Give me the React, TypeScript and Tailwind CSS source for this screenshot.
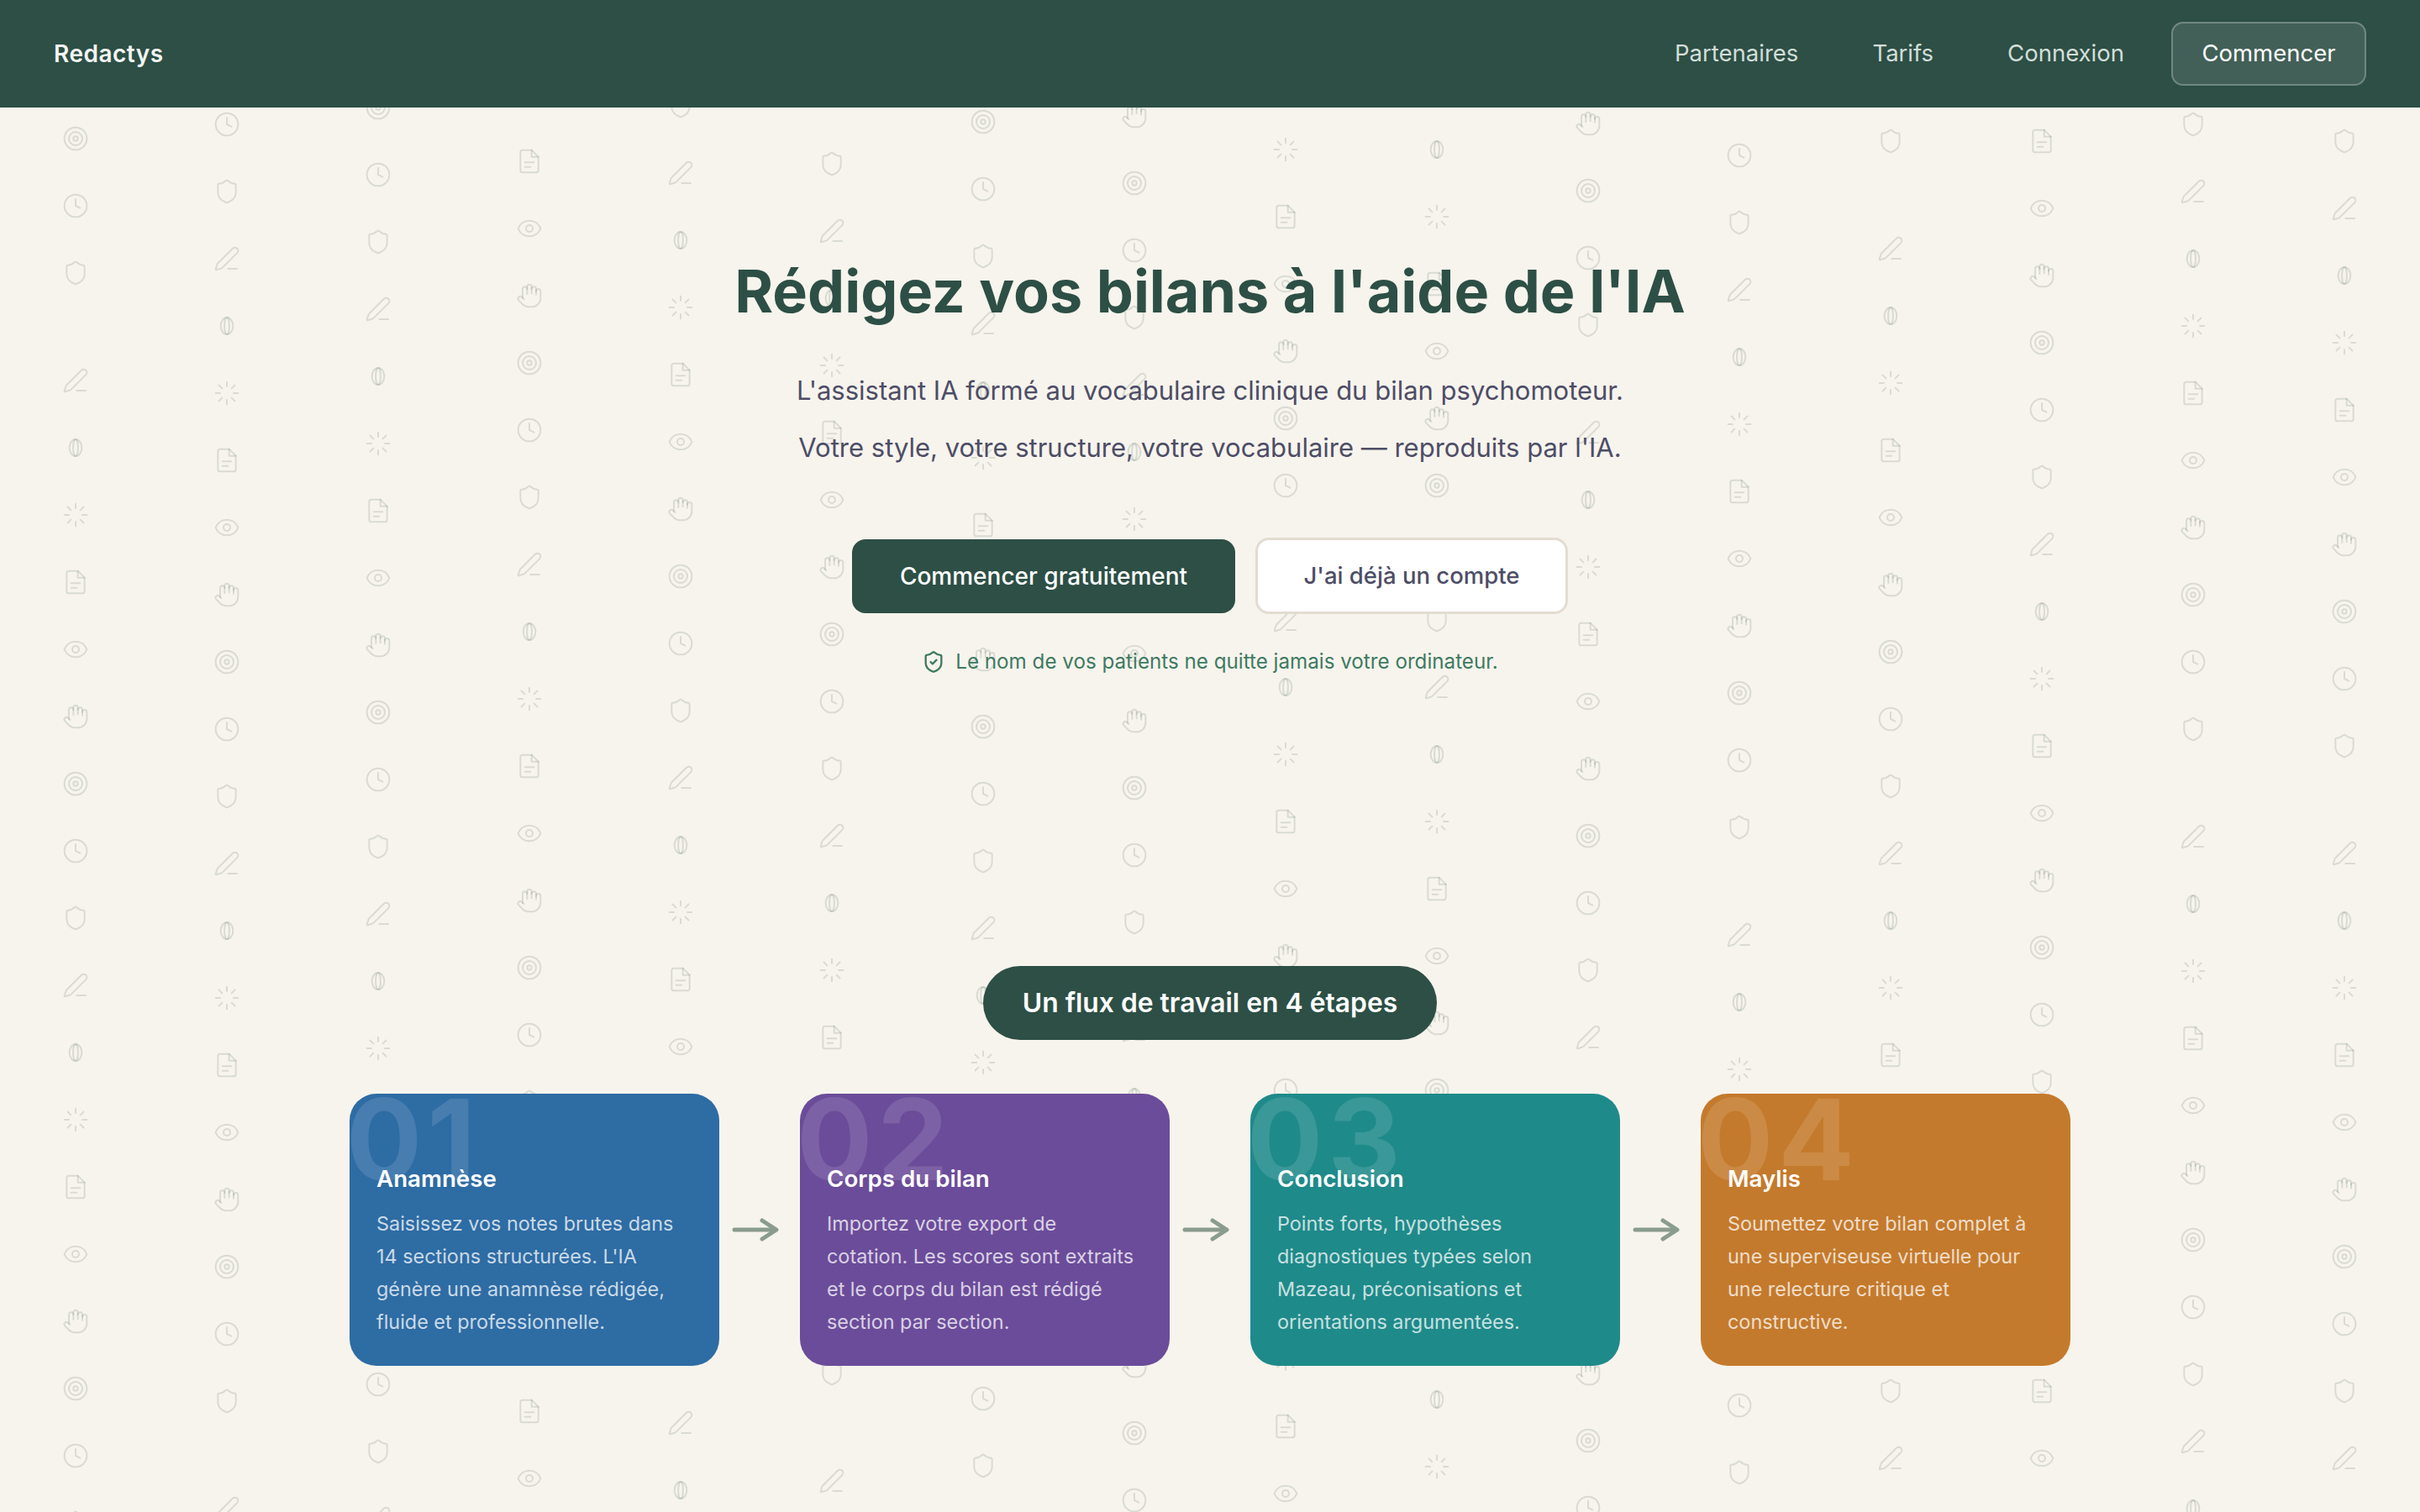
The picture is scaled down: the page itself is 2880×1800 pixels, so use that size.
import { Clock, Eye, Hand, Loader, PenLine, Shield, ShieldCheck, Target } from "lucide-react";

const strokeProps = { width: 32, height: 32, strokeWidth: 1.5 };

// These two are not in the icon set in this exact shape.
function MicIcon() {
  return (
    <svg width="32" height="32" viewBox="0 0 24 24" fill="none" stroke="currentColor" strokeWidth="1.5">
      <ellipse cx="12" cy="12" rx="5.5" ry="7.5" />
      <ellipse cx="12" cy="12" rx="2.2" ry="7.5" />
    </svg>
  );
}

function DocIcon() {
  return (
    <svg width="32" height="32" viewBox="0 0 24 24" fill="none" stroke="currentColor" strokeWidth="1.5" strokeLinecap="round" strokeLinejoin="round">
      <path d="M14 2H6a2 2 0 0 0-2 2v16a2 2 0 0 0 2 2h12a2 2 0 0 0 2-2V8z" />
      <path d="M14 2v6h6" />
      <path d="M8 13h8" />
      <path d="M8 17h5" />
    </svg>
  );
}

const ICONS = [
  <Target {...strokeProps} />,
  <Clock {...strokeProps} />,
  <Shield {...strokeProps} />,
  <PenLine {...strokeProps} />,
  <MicIcon />,
  <Loader {...strokeProps} />,
  <DocIcon />,
  <Eye {...strokeProps} />,
  <Hand {...strokeProps} />,
];

// top: centre of the first icon, start: its index in ICONS, seam: item that gets the 48px jump
const COLUMNS = [
  { top: 165, start: 0, seam: 3 },
  { top: 148, start: 1, seam: 20 },
  { top: 128, start: 0, seam: -1 },
  { top: 192, start: 6, seam: 15 },
  { top: 126, start: 2, seam: 19 },
  { top: 195, start: 2, seam: 19 },
  { top: 145, start: 0, seam: -1 },
  { top: 138, start: 8, seam: 13 },
  { top: 178, start: 5, seam: -1 },
  { top: 178, start: 4, seam: 17 },
  { top: 147, start: 8, seam: 4 },
  { top: 185, start: 1, seam: 11 },
  { top: 168, start: 2, seam: 1 },
  { top: 168, start: 6, seam: 15 },
  { top: 148, start: 2, seam: 10 },
  { top: 168, start: 2, seam: 10 },
];

const STEPS = [
  {
    num: "01",
    title: "Anamnèse",
    color: "bg-[#2e6ca4]",
    lines: ["Saisissez vos notes brutes dans", "14 sections structurées. L'IA", "génère une anamnèse rédigée,", "fluide et professionnelle."],
  },
  {
    num: "02",
    title: "Corps du bilan",
    color: "bg-[#6b4c9a]",
    lines: ["Importez votre export de", "cotation. Les scores sont extraits", "et le corps du bilan est rédigé", "section par section."],
  },
  {
    num: "03",
    title: "Conclusion",
    color: "bg-[#1f8a8a]",
    lines: ["Points forts, hypothèses", "diagnostiques typées selon", "Mazeau, préconisations et", "orientations argumentées."],
  },
  {
    num: "04",
    title: "Maylis",
    color: "bg-[#c47a2c]",
    lines: ["Soumettez votre bilan complet à", "une superviseuse virtuelle pour", "une relecture critique et", "constructive."],
  },
];

function IconPattern() {
  return (
    <div className="absolute inset-0 flex overflow-hidden text-[#2d4f45]/15 blur-[0.5px]">
      {COLUMNS.map((col, c) => (
        <div key={c} className="flex w-[180px] shrink-0 flex-col" style={{ marginTop: col.top - 40 }}>
          {Array.from({ length: 22 }).map((_, i) => (
            <div
              key={i}
              className="flex h-[80px] shrink-0 items-center justify-center"
              style={{ marginTop: i === col.seam ? 48 : 0 }}
            >
              {ICONS[(col.start + i) % 9]}
            </div>
          ))}
        </div>
      ))}
    </div>
  );
}

function StepArrow() {
  return (
    <div className="flex w-[96px] shrink-0 items-center justify-center pr-[10px]">
      <svg width="56" height="28" viewBox="0 0 56 28" fill="none" stroke="#8a9c8e" strokeWidth="5" strokeLinecap="round" strokeLinejoin="round">
        <path d="M3 14H52" />
        <path d="M36 3l17 11-17 11" />
      </svg>
    </div>
  );
}

export default function App() {
  return (
    <div className="relative h-screen overflow-hidden bg-[#f7f4ed] font-['Inter',sans-serif]">
      <IconPattern />

      <header className="relative flex h-[128px] items-center justify-between bg-[#2d4f45] px-[64px]">
        <span className="text-[28px] font-semibold tracking-[0.5px] text-[#f2f5f3]">Redactys</span>
        <nav className="flex items-center text-[27.5px] text-[#d3ded9]">
          <a className="mr-[88px]">Partenaires</a>
          <a className="mr-[88px]">Tarifs</a>
          <a className="mr-[56px]">Connexion</a>
          <a className="flex h-[76px] w-[232px] items-center justify-center rounded-[14px] border-2 border-white/25 bg-white/10 text-white">
            Commencer
          </a>
        </nav>
      </header>

      <main className="relative flex flex-col items-center">
        <h1 className="mt-[172px] text-[70px] leading-[94px] font-bold text-[#2d4f45]">
          Rédigez vos bilans à l'aide de l'IA
        </h1>
        <p className="mt-[37px] text-center text-[31px] leading-[68px] text-[#4d4d66]">
          L'assistant IA formé au vocabulaire clinique du bilan psychomoteur.
          <br />
          Votre style, votre structure, votre vocabulaire — reproduits par l'IA.
        </p>

        <div className="mt-[73px] flex items-center gap-[24px]">
          <button className="flex h-[88px] w-[456px] items-center justify-center rounded-[16px] bg-[#2d4f45] text-[28px] font-medium text-white">
            Commencer gratuitement
          </button>
          <button className="flex h-[91px] w-[372px] items-center justify-center rounded-[16px] border-[3px] border-[#e3dcd0] bg-white text-[27.5px] font-medium text-[#4d4d66]">
            J'ai déjà un compte
          </button>
        </div>

        <div className="mt-[39px] flex h-[36px] items-center gap-[12px] text-[24.2px] text-[#3e7a62]">
          <ShieldCheck width={28} height={28} strokeWidth={2} />
          <span>Le nom de vos patients ne quitte jamais votre ordinateur.</span>
        </div>

        <div className="mt-[344px] flex h-[88px] w-[540px] items-center justify-center rounded-full bg-[#2d4f45] text-[31.8px] font-semibold text-white">
          Un flux de travail en 4 étapes
        </div>

        <div className="mt-[64px] flex w-[2048px]">
          {STEPS.map((step, i) => (
            <div key={step.num} className="contents">
              {i > 0 && <StepArrow />}
              <div className={`relative h-[324px] w-[440px] shrink-0 overflow-hidden rounded-[32px] px-[32px] pt-[82px] text-white ${step.color}`}>
                <span className="absolute left-[-4px] top-[-26px] text-[134px] leading-[160px] font-bold tracking-[6px] text-white/12">
                  {step.num}
                </span>
                <h3 className="relative text-[27.7px] leading-[38px] font-semibold">{step.title}</h3>
                <p className="relative mt-[15px] text-[23.4px] leading-[39px] whitespace-nowrap text-white/75">
                  {step.lines.map((line) => (
                    <span key={line} className="block">
                      {line}
                    </span>
                  ))}
                </p>
              </div>
            </div>
          ))}
        </div>
      </main>
    </div>
  );
}
